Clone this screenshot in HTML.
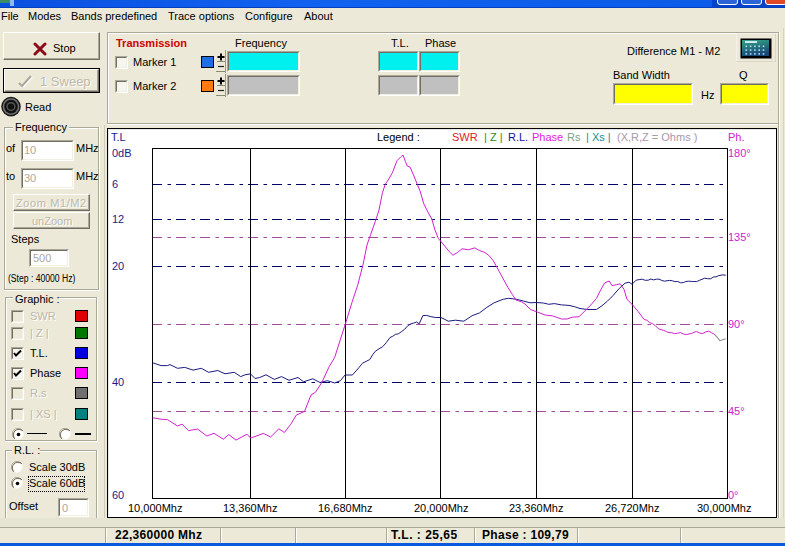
<!DOCTYPE html>
<html><head><meta charset="utf-8"><style>
html,body{margin:0;padding:0;width:785px;height:546px;overflow:hidden;background:#ECE9D8;}
.t{position:absolute;white-space:nowrap;font-family:"Liberation Sans",sans-serif;}
.b{position:absolute;}
</style></head><body>
<div class="b" style="left:0px;top:0px;width:785px;height:7px;background:linear-gradient(90deg,#0A50E0,#1262F0 40%,#0A5AE8)"></div>
<div class="b" style="left:0px;top:7px;width:785px;height:1px;background:#0340C0"></div>
<div class="b" style="left:0px;top:0px;width:10px;height:3px;background:#3c8c6a"></div>
<div class="b" style="left:10px;top:0px;width:4px;height:6px;background:#8CB8F0"></div>
<div class="b" style="left:712px;top:0px;width:73px;height:7px;background:#0842C8"></div>
<div class="b" style="left:717px;top:-4px;width:21px;height:9px;background:#2C64D8;border:1px solid #fff;border-radius:3px;box-sizing:border-box"></div>
<div class="b" style="left:741px;top:-4px;width:21px;height:9px;background:#2C64D8;border:1px solid #fff;border-radius:3px;box-sizing:border-box"></div>
<div class="b" style="left:765px;top:-4px;width:22px;height:9px;background:#E0482A;border:1px solid #fff;border-radius:3px;box-sizing:border-box"></div>
<div class="t" style="left:1px;top:10.19px;font-size:11px;line-height:13px;color:#000;font-weight:normal;">File</div>
<div class="t" style="left:28px;top:10.19px;font-size:11px;line-height:13px;color:#000;font-weight:normal;">Modes</div>
<div class="t" style="left:71px;top:10.19px;font-size:11px;line-height:13px;color:#000;font-weight:normal;">Bands predefined</div>
<div class="t" style="left:168px;top:10.19px;font-size:11px;line-height:13px;color:#000;font-weight:normal;">Trace options</div>
<div class="t" style="left:245px;top:10.19px;font-size:11px;line-height:13px;color:#000;font-weight:normal;">Configure</div>
<div class="t" style="left:304px;top:10.19px;font-size:11px;line-height:13px;color:#000;font-weight:normal;">About</div>
<div class="b" style="left:3px;top:32px;width:97px;height:28px;background:#ECE9D8;border-top:1px solid #fff;border-left:1px solid #fff;border-right:1px solid #716F64;border-bottom:1px solid #716F64;box-sizing:border-box"></div>
<div class="b" style="left:4px;top:33px;width:95px;height:26px;border-right:1px solid #ACA899;border-bottom:1px solid #ACA899;box-sizing:border-box"></div>
<svg class="b" style="left:33px;top:42px" width="14" height="14"><path d="M2 2 L12 12 M12 2 L2 12" stroke="#8B0A1A" stroke-width="3" stroke-linecap="round"/></svg>
<div class="t" style="left:53px;top:41.69px;font-size:11px;line-height:13px;color:#000;font-weight:normal;">Stop</div>
<div class="b" style="left:3px;top:68px;width:97px;height:25px;border:1px solid #000;box-sizing:border-box"></div>
<div class="b" style="left:4px;top:69px;width:95px;height:23px;background:#ECE9D8;border-top:1px solid #fff;border-left:1px solid #fff;border-right:1px solid #716F64;border-bottom:1px solid #716F64;box-sizing:border-box"></div>
<div class="b" style="left:5px;top:70px;width:93px;height:21px;border-right:1px solid #ACA899;border-bottom:1px solid #ACA899;box-sizing:border-box"></div>
<svg class="b" style="left:17px;top:74px" width="17" height="13"><path d="M2 9 L5 12 L14 2" stroke="#fff" stroke-width="2" fill="none" transform="translate(1,1)"/><path d="M2 9 L5 12 L14 2" stroke="#ACA899" stroke-width="2" fill="none"/></svg>
<div class="t" style="left:41px;top:75.00px;font-size:13px;line-height:15px;color:#fff;font-weight:normal;">1 Sweep</div>
<div class="t" style="left:40px;top:74.00px;font-size:13px;line-height:15px;color:#BCB8A8;font-weight:normal;">1 Sweep</div>
<svg class="b" style="left:1px;top:96px" width="21" height="21"><circle cx="10" cy="10.6" r="9.8" fill="#1a1a1a"/><circle cx="10" cy="10.6" r="8.4" fill="#707070"/><circle cx="10" cy="10.6" r="6.8" fill="#111"/><circle cx="10" cy="10.6" r="4.6" fill="#555"/><circle cx="10" cy="10.6" r="3.2" fill="#111"/></svg>
<div class="t" style="left:25px;top:100.69px;font-size:11px;line-height:13px;color:#000;font-weight:normal;">Read</div>
<div class="b" style="left:4px;top:127px;width:95px;height:163px;border:1px solid #ACA899;box-sizing:border-box"></div>
<div class="b" style="left:5px;top:128px;width:93px;height:161px;border-top:1px solid #fff;border-left:1px solid #fff;box-sizing:border-box"></div>
<div class="b" style="left:4px;top:127px;width:96px;height:164px;border-right:1px solid #fff;border-bottom:1px solid #fff;box-sizing:border-box"></div>
<div class="b" style="left:13px;top:125px;width:56px;height:6px;background:#ECE9D8"></div>
<div class="t" style="left:15px;top:120.69px;font-size:11px;line-height:13px;color:#000;font-weight:normal;">Frequency</div>
<div class="t" style="left:6px;top:142.19px;font-size:11px;line-height:13px;color:#000;font-weight:normal;">of</div>
<div class="b" style="left:21px;top:140px;width:53px;height:21px;background:#fff;border-top:1px solid #ACA899;border-left:1px solid #ACA899;border-right:1px solid #fff;border-bottom:1px solid #fff;box-sizing:border-box"></div>
<div class="b" style="left:22px;top:141px;width:51px;height:19px;border-top:1px solid #716F64;border-left:1px solid #716F64;border-right:1px solid #F1EFE2;border-bottom:1px solid #F1EFE2;box-sizing:border-box"></div>
<div class="t" style="left:24px;top:143.69px;font-size:11px;line-height:13px;color:#ACA899;font-weight:normal;">10</div>
<div class="t" style="left:76px;top:142.19px;font-size:11px;line-height:13px;color:#000;font-weight:normal;">MHz</div>
<div class="t" style="left:6px;top:170.19px;font-size:11px;line-height:13px;color:#000;font-weight:normal;">to</div>
<div class="b" style="left:21px;top:168px;width:53px;height:21px;background:#fff;border-top:1px solid #ACA899;border-left:1px solid #ACA899;border-right:1px solid #fff;border-bottom:1px solid #fff;box-sizing:border-box"></div>
<div class="b" style="left:22px;top:169px;width:51px;height:19px;border-top:1px solid #716F64;border-left:1px solid #716F64;border-right:1px solid #F1EFE2;border-bottom:1px solid #F1EFE2;box-sizing:border-box"></div>
<div class="t" style="left:24px;top:171.69px;font-size:11px;line-height:13px;color:#ACA899;font-weight:normal;">30</div>
<div class="t" style="left:76px;top:170.19px;font-size:11px;line-height:13px;color:#000;font-weight:normal;">MHz</div>
<div class="b" style="left:13px;top:194px;width:77px;height:17px;background:#ECE9D8;border-top:1px solid #fff;border-left:1px solid #fff;border-right:1px solid #716F64;border-bottom:1px solid #716F64;box-sizing:border-box"></div>
<div class="b" style="left:14px;top:195px;width:75px;height:15px;border-right:1px solid #ACA899;border-bottom:1px solid #ACA899;box-sizing:border-box"></div>
<div class="t" style="left:17px;top:197.69px;font-size:11px;line-height:13px;color:#fff;font-weight:normal;"><span style='letter-spacing:0.6px'>Zoom M1/M2</span></div>
<div class="t" style="left:16px;top:196.69px;font-size:11px;line-height:13px;color:#BCB8A8;font-weight:normal;"><span style='letter-spacing:0.6px'>Zoom M1/M2</span></div>
<div class="b" style="left:13px;top:212px;width:77px;height:17px;background:#ECE9D8;border-top:1px solid #fff;border-left:1px solid #fff;border-right:1px solid #716F64;border-bottom:1px solid #716F64;box-sizing:border-box"></div>
<div class="b" style="left:14px;top:213px;width:75px;height:15px;border-right:1px solid #ACA899;border-bottom:1px solid #ACA899;box-sizing:border-box"></div>
<div class="t" style="left:33px;top:215.69px;font-size:11px;line-height:13px;color:#fff;font-weight:normal;">unZoom</div>
<div class="t" style="left:32px;top:214.69px;font-size:11px;line-height:13px;color:#BCB8A8;font-weight:normal;">unZoom</div>
<div class="t" style="left:11px;top:233.19px;font-size:11px;line-height:13px;color:#000;font-weight:normal;">Steps</div>
<div class="b" style="left:29px;top:249px;width:40px;height:18px;background:#fff;border-top:1px solid #ACA899;border-left:1px solid #ACA899;border-right:1px solid #fff;border-bottom:1px solid #fff;box-sizing:border-box"></div>
<div class="b" style="left:30px;top:250px;width:38px;height:16px;border-top:1px solid #716F64;border-left:1px solid #716F64;border-right:1px solid #F1EFE2;border-bottom:1px solid #F1EFE2;box-sizing:border-box"></div>
<div class="t" style="left:33px;top:251.69px;font-size:11px;line-height:13px;color:#ACA899;font-weight:normal;">500</div>
<div class="t" style="left:8px;top:272.54px;font-size:10px;line-height:12px;color:#000;font-weight:normal;transform:scaleX(0.86);transform-origin:0 0">(Step : 40000 Hz)</div>
<div class="b" style="left:5px;top:297px;width:92px;height:144px;border:1px solid #ACA899;box-sizing:border-box"></div>
<div class="b" style="left:6px;top:298px;width:90px;height:142px;border-top:1px solid #fff;border-left:1px solid #fff;box-sizing:border-box"></div>
<div class="b" style="left:5px;top:297px;width:93px;height:145px;border-right:1px solid #fff;border-bottom:1px solid #fff;box-sizing:border-box"></div>
<div class="b" style="left:13px;top:295px;width:46px;height:6px;background:#ECE9D8"></div>
<div class="t" style="left:15px;top:292.69px;font-size:11px;line-height:13px;color:#000;font-weight:normal;">Graphic :</div>
<div class="b" style="left:11px;top:310px;width:13px;height:13px;background:#ECE9D8;border-top:1px solid #ACA899;border-left:1px solid #ACA899;border-right:1px solid #fff;border-bottom:1px solid #fff;box-sizing:border-box"></div>
<div class="b" style="left:12px;top:311px;width:11px;height:11px;border-top:1px solid #716F64;border-left:1px solid #716F64;border-right:1px solid #F1EFE2;border-bottom:1px solid #F1EFE2;box-sizing:border-box"></div>
<div class="t" style="left:31px;top:310.69px;font-size:11px;line-height:13px;color:#fff;font-weight:normal;">SWR</div>
<div class="t" style="left:30px;top:309.69px;font-size:11px;line-height:13px;color:#BCB8A8;font-weight:normal;">SWR</div>
<div class="b" style="left:75px;top:310px;width:13px;height:12px;background:#E00000;border:1px solid #000;box-sizing:border-box"></div>
<div class="b" style="left:11px;top:327px;width:13px;height:13px;background:#ECE9D8;border-top:1px solid #ACA899;border-left:1px solid #ACA899;border-right:1px solid #fff;border-bottom:1px solid #fff;box-sizing:border-box"></div>
<div class="b" style="left:12px;top:328px;width:11px;height:11px;border-top:1px solid #716F64;border-left:1px solid #716F64;border-right:1px solid #F1EFE2;border-bottom:1px solid #F1EFE2;box-sizing:border-box"></div>
<div class="t" style="left:31px;top:327.69px;font-size:11px;line-height:13px;color:#fff;font-weight:normal;">| Z |</div>
<div class="t" style="left:30px;top:326.69px;font-size:11px;line-height:13px;color:#BCB8A8;font-weight:normal;">| Z |</div>
<div class="b" style="left:75px;top:327px;width:13px;height:12px;background:#007800;border:1px solid #000;box-sizing:border-box"></div>
<div class="b" style="left:11px;top:347px;width:13px;height:13px;background:#F6F5EE;border-top:1px solid #ACA899;border-left:1px solid #ACA899;border-right:1px solid #fff;border-bottom:1px solid #fff;box-sizing:border-box"></div>
<div class="b" style="left:12px;top:348px;width:11px;height:11px;border-top:1px solid #716F64;border-left:1px solid #716F64;border-right:1px solid #F1EFE2;border-bottom:1px solid #F1EFE2;box-sizing:border-box"></div>
<svg class="b" style="left:11px;top:347px" width="13" height="13"><path d="M3 6 L5 8.5 L10 3.5" stroke="#000" stroke-width="2" fill="none"/></svg>
<div class="t" style="left:30px;top:346.69px;font-size:11px;line-height:13px;color:#000;font-weight:normal;">T.L.</div>
<div class="b" style="left:75px;top:347px;width:13px;height:12px;background:#0000E0;border:1px solid #000;box-sizing:border-box"></div>
<div class="b" style="left:11px;top:367px;width:13px;height:13px;background:#F6F5EE;border-top:1px solid #ACA899;border-left:1px solid #ACA899;border-right:1px solid #fff;border-bottom:1px solid #fff;box-sizing:border-box"></div>
<div class="b" style="left:12px;top:368px;width:11px;height:11px;border-top:1px solid #716F64;border-left:1px solid #716F64;border-right:1px solid #F1EFE2;border-bottom:1px solid #F1EFE2;box-sizing:border-box"></div>
<svg class="b" style="left:11px;top:367px" width="13" height="13"><path d="M3 6 L5 8.5 L10 3.5" stroke="#000" stroke-width="2" fill="none"/></svg>
<div class="t" style="left:30px;top:366.69px;font-size:11px;line-height:13px;color:#000;font-weight:normal;">Phase</div>
<div class="b" style="left:75px;top:367px;width:13px;height:12px;background:#FF00FF;border:1px solid #000;box-sizing:border-box"></div>
<div class="b" style="left:11px;top:387px;width:13px;height:13px;background:#ECE9D8;border-top:1px solid #ACA899;border-left:1px solid #ACA899;border-right:1px solid #fff;border-bottom:1px solid #fff;box-sizing:border-box"></div>
<div class="b" style="left:12px;top:388px;width:11px;height:11px;border-top:1px solid #716F64;border-left:1px solid #716F64;border-right:1px solid #F1EFE2;border-bottom:1px solid #F1EFE2;box-sizing:border-box"></div>
<div class="t" style="left:31px;top:387.69px;font-size:11px;line-height:13px;color:#fff;font-weight:normal;">R.s</div>
<div class="t" style="left:30px;top:386.69px;font-size:11px;line-height:13px;color:#BCB8A8;font-weight:normal;">R.s</div>
<div class="b" style="left:75px;top:387px;width:13px;height:12px;background:#707070;border:1px solid #000;box-sizing:border-box"></div>
<div class="b" style="left:11px;top:408px;width:13px;height:13px;background:#ECE9D8;border-top:1px solid #ACA899;border-left:1px solid #ACA899;border-right:1px solid #fff;border-bottom:1px solid #fff;box-sizing:border-box"></div>
<div class="b" style="left:12px;top:409px;width:11px;height:11px;border-top:1px solid #716F64;border-left:1px solid #716F64;border-right:1px solid #F1EFE2;border-bottom:1px solid #F1EFE2;box-sizing:border-box"></div>
<div class="t" style="left:31px;top:408.69px;font-size:11px;line-height:13px;color:#fff;font-weight:normal;">| XS |</div>
<div class="t" style="left:30px;top:407.69px;font-size:11px;line-height:13px;color:#BCB8A8;font-weight:normal;">| XS |</div>
<div class="b" style="left:75px;top:408px;width:13px;height:12px;background:#008080;border:1px solid #000;box-sizing:border-box"></div>
<svg class="b" style="left:12px;top:428px" width="13" height="13"><path d="M2 10 A5.5 5.5 0 0 1 10 2" stroke="#ACA899" fill="none"/><path d="M3 11 A5 5 0 0 1 11 3" stroke="#716F64" fill="none"/><path d="M10.5 3 A5.5 5.5 0 0 1 3 10.5" stroke="#fff" fill="none"/><circle cx="6.5" cy="6.5" r="4.2" fill="#fff"/><circle cx="6.5" cy="6.5" r="1.8" fill="#000"/></svg>
<div class="b" style="left:27px;top:433px;width:20px;height:1px;background:#000"></div>
<svg class="b" style="left:59px;top:428px" width="13" height="13"><path d="M2 10 A5.5 5.5 0 0 1 10 2" stroke="#ACA899" fill="none"/><path d="M3 11 A5 5 0 0 1 11 3" stroke="#716F64" fill="none"/><path d="M10.5 3 A5.5 5.5 0 0 1 3 10.5" stroke="#fff" fill="none"/><circle cx="6.5" cy="6.5" r="4.2" fill="#fff"/></svg>
<div class="b" style="left:75px;top:433px;width:16px;height:2px;background:#000"></div>
<div class="b" style="left:5px;top:450px;width:92px;height:71px;border:1px solid #ACA899;box-sizing:border-box"></div>
<div class="b" style="left:6px;top:451px;width:90px;height:69px;border-top:1px solid #fff;border-left:1px solid #fff;box-sizing:border-box"></div>
<div class="b" style="left:5px;top:450px;width:93px;height:72px;border-right:1px solid #fff;border-bottom:1px solid #fff;box-sizing:border-box"></div>
<div class="b" style="left:12px;top:448px;width:28px;height:6px;background:#ECE9D8"></div>
<div class="t" style="left:14px;top:444.19px;font-size:11px;line-height:13px;color:#000;font-weight:normal;">R.L. :</div>
<svg class="b" style="left:11px;top:461px" width="13" height="13"><path d="M2 10 A5.5 5.5 0 0 1 10 2" stroke="#ACA899" fill="none"/><path d="M3 11 A5 5 0 0 1 11 3" stroke="#716F64" fill="none"/><path d="M10.5 3 A5.5 5.5 0 0 1 3 10.5" stroke="#fff" fill="none"/><circle cx="6.5" cy="6.5" r="4.2" fill="#fff"/></svg>
<div class="t" style="left:29px;top:461.19px;font-size:11px;line-height:13px;color:#000;font-weight:normal;">Scale 30dB</div>
<svg class="b" style="left:11px;top:477px" width="13" height="13"><path d="M2 10 A5.5 5.5 0 0 1 10 2" stroke="#ACA899" fill="none"/><path d="M3 11 A5 5 0 0 1 11 3" stroke="#716F64" fill="none"/><path d="M10.5 3 A5.5 5.5 0 0 1 3 10.5" stroke="#fff" fill="none"/><circle cx="6.5" cy="6.5" r="4.2" fill="#fff"/><circle cx="6.5" cy="6.5" r="1.8" fill="#000"/></svg>
<div class="t" style="left:29px;top:477.19px;font-size:11px;line-height:13px;color:#000;font-weight:normal;">Scale 60dB</div>
<div class="b" style="left:28px;top:476px;width:57px;height:16px;border:1px dotted #000;box-sizing:border-box"></div>
<div class="t" style="left:9px;top:499.69px;font-size:11px;line-height:13px;color:#000;font-weight:normal;">Offset</div>
<div class="b" style="left:58px;top:498px;width:31px;height:19px;background:#fff;border-top:1px solid #ACA899;border-left:1px solid #ACA899;border-right:1px solid #fff;border-bottom:1px solid #fff;box-sizing:border-box"></div>
<div class="b" style="left:59px;top:499px;width:29px;height:17px;border-top:1px solid #716F64;border-left:1px solid #716F64;border-right:1px solid #F1EFE2;border-bottom:1px solid #F1EFE2;box-sizing:border-box"></div>
<div class="t" style="left:62px;top:501.69px;font-size:11px;line-height:13px;color:#ACA899;font-weight:normal;">0</div>
<div class="b" style="left:104px;top:125px;width:1px;height:400px;background:#CFCBBB"></div>
<div class="b" style="left:107px;top:32px;width:672px;height:92px;border:1px solid #ACA899;box-sizing:border-box"></div>
<div class="b" style="left:108px;top:33px;width:670px;height:90px;border-top:1px solid #fff;border-left:1px solid #fff;box-sizing:border-box"></div>
<div class="b" style="left:107px;top:32px;width:673px;height:93px;border-right:1px solid #fff;border-bottom:1px solid #fff;box-sizing:border-box"></div>
<div class="t" style="left:116px;top:36.69px;font-size:11px;line-height:13px;color:#D00000;font-weight:bold;">Transmission</div>
<div class="b" style="left:115px;top:56px;width:13px;height:13px;background:#F6F5EE;border-top:1px solid #ACA899;border-left:1px solid #ACA899;border-right:1px solid #fff;border-bottom:1px solid #fff;box-sizing:border-box"></div>
<div class="b" style="left:116px;top:57px;width:11px;height:11px;border-top:1px solid #716F64;border-left:1px solid #716F64;border-right:1px solid #F1EFE2;border-bottom:1px solid #F1EFE2;box-sizing:border-box"></div>
<div class="t" style="left:133px;top:55.69px;font-size:11px;line-height:13px;color:#000;font-weight:normal;">Marker 1</div>
<div class="b" style="left:115px;top:80px;width:13px;height:13px;background:#F6F5EE;border-top:1px solid #ACA899;border-left:1px solid #ACA899;border-right:1px solid #fff;border-bottom:1px solid #fff;box-sizing:border-box"></div>
<div class="b" style="left:116px;top:81px;width:11px;height:11px;border-top:1px solid #716F64;border-left:1px solid #716F64;border-right:1px solid #F1EFE2;border-bottom:1px solid #F1EFE2;box-sizing:border-box"></div>
<div class="t" style="left:133px;top:79.69px;font-size:11px;line-height:13px;color:#000;font-weight:normal;">Marker 2</div>
<div class="b" style="left:201px;top:56px;width:13px;height:12px;background:#1E6FE6;border:1px solid #000;box-sizing:border-box"></div>
<div class="b" style="left:201px;top:80px;width:13px;height:12px;background:#FF7A10;border:1px solid #000;box-sizing:border-box"></div>
<svg class="b" style="left:215px;top:50px" width="11" height="23"><path d="M2.5 7 H9.5 M6 3.5 V10.5" stroke="#000" stroke-width="2"/><path d="M2 11.5 H10" stroke="#8A8878"/><path d="M3 16.5 H9" stroke="#222" stroke-width="1.2"/><path d="M1 21.5 H11" stroke="#8A8A70"/><path d="M10.5 0 V23" stroke="#9A9888"/></svg>
<svg class="b" style="left:215px;top:74px" width="11" height="23"><path d="M2.5 7 H9.5 M6 3.5 V10.5" stroke="#000" stroke-width="2"/><path d="M2 11.5 H10" stroke="#8A8878"/><path d="M3 16.5 H9" stroke="#222" stroke-width="1.2"/><path d="M1 21.5 H11" stroke="#8A8A70"/><path d="M10.5 0 V23" stroke="#9A9888"/></svg>
<div class="t" style="left:235px;top:37.19px;font-size:11px;line-height:13px;color:#000;font-weight:normal;">Frequency</div>
<div class="b" style="left:227px;top:51px;width:73px;height:21px;background:#00F0F0;border-top:1px solid #ACA899;border-left:1px solid #ACA899;border-right:1px solid #fff;border-bottom:1px solid #fff;box-sizing:border-box"></div>
<div class="b" style="left:228px;top:52px;width:71px;height:19px;border-top:1px solid #716F64;border-left:1px solid #716F64;border-right:1px solid #F1EFE2;border-bottom:1px solid #F1EFE2;box-sizing:border-box"></div>
<div class="b" style="left:227px;top:75px;width:73px;height:21px;background:#C0C0C0;border-top:1px solid #ACA899;border-left:1px solid #ACA899;border-right:1px solid #fff;border-bottom:1px solid #fff;box-sizing:border-box"></div>
<div class="b" style="left:228px;top:76px;width:71px;height:19px;border-top:1px solid #716F64;border-left:1px solid #716F64;border-right:1px solid #F1EFE2;border-bottom:1px solid #F1EFE2;box-sizing:border-box"></div>
<div class="t" style="left:391px;top:37.19px;font-size:11px;line-height:13px;color:#000;font-weight:normal;">T.L.</div>
<div class="t" style="left:425px;top:37.19px;font-size:11px;line-height:13px;color:#000;font-weight:normal;">Phase</div>
<div class="b" style="left:378px;top:51px;width:41px;height:21px;background:#00F0F0;border-top:1px solid #ACA899;border-left:1px solid #ACA899;border-right:1px solid #fff;border-bottom:1px solid #fff;box-sizing:border-box"></div>
<div class="b" style="left:379px;top:52px;width:39px;height:19px;border-top:1px solid #716F64;border-left:1px solid #716F64;border-right:1px solid #F1EFE2;border-bottom:1px solid #F1EFE2;box-sizing:border-box"></div>
<div class="b" style="left:419px;top:51px;width:41px;height:21px;background:#00F0F0;border-top:1px solid #ACA899;border-left:1px solid #ACA899;border-right:1px solid #fff;border-bottom:1px solid #fff;box-sizing:border-box"></div>
<div class="b" style="left:420px;top:52px;width:39px;height:19px;border-top:1px solid #716F64;border-left:1px solid #716F64;border-right:1px solid #F1EFE2;border-bottom:1px solid #F1EFE2;box-sizing:border-box"></div>
<div class="b" style="left:378px;top:75px;width:41px;height:21px;background:#C0C0C0;border-top:1px solid #ACA899;border-left:1px solid #ACA899;border-right:1px solid #fff;border-bottom:1px solid #fff;box-sizing:border-box"></div>
<div class="b" style="left:379px;top:76px;width:39px;height:19px;border-top:1px solid #716F64;border-left:1px solid #716F64;border-right:1px solid #F1EFE2;border-bottom:1px solid #F1EFE2;box-sizing:border-box"></div>
<div class="b" style="left:419px;top:75px;width:41px;height:21px;background:#C0C0C0;border-top:1px solid #ACA899;border-left:1px solid #ACA899;border-right:1px solid #fff;border-bottom:1px solid #fff;box-sizing:border-box"></div>
<div class="b" style="left:420px;top:76px;width:39px;height:19px;border-top:1px solid #716F64;border-left:1px solid #716F64;border-right:1px solid #F1EFE2;border-bottom:1px solid #F1EFE2;box-sizing:border-box"></div>
<div class="t" style="left:627px;top:44.69px;font-size:11px;line-height:13px;color:#000;font-weight:normal;">Difference M1 - M2</div>
<div class="b" style="left:736px;top:33px;width:40px;height:29px;border-top:1px solid #F4F2EA;border-left:1px solid #F4F2EA;border-right:1px solid #DCD8C8;border-bottom:1px solid #DCD8C8;box-sizing:border-box"></div>
<svg class="b" style="left:740px;top:38px" width="32" height="21"><rect x="0.5" y="0.5" width="31" height="20" fill="#000" /><rect x="2" y="2" width="27" height="16" fill="url(#cg)"/><defs><linearGradient id="cg" x1="0" y1="0" x2="0.3" y2="1"><stop offset="0" stop-color="#34A882"/><stop offset="1" stop-color="#184878"/></linearGradient></defs><rect x="5" y="3" width="12" height="2" fill="#CFE8FF"/><rect x="5.5" y="7.5" width="1.6" height="1.6" fill="#B8D8F8"/><rect x="9.8" y="7.5" width="1.6" height="1.6" fill="#B8D8F8"/><rect x="14.1" y="7.5" width="1.6" height="1.6" fill="#B8D8F8"/><rect x="18.4" y="7.5" width="1.6" height="1.6" fill="#B8D8F8"/><rect x="22.7" y="7.5" width="1.6" height="1.6" fill="#B8D8F8"/><rect x="5.5" y="11.3" width="1.6" height="1.6" fill="#B8D8F8"/><rect x="9.8" y="11.3" width="1.6" height="1.6" fill="#B8D8F8"/><rect x="14.1" y="11.3" width="1.6" height="1.6" fill="#B8D8F8"/><rect x="18.4" y="11.3" width="1.6" height="1.6" fill="#B8D8F8"/><rect x="22.7" y="11.3" width="1.6" height="1.6" fill="#B8D8F8"/><rect x="5.5" y="15.1" width="1.6" height="1.6" fill="#B8D8F8"/><rect x="9.8" y="15.1" width="1.6" height="1.6" fill="#B8D8F8"/><rect x="14.1" y="15.1" width="1.6" height="1.6" fill="#B8D8F8"/><rect x="18.4" y="15.1" width="1.6" height="1.6" fill="#B8D8F8"/><rect x="22.7" y="15.1" width="1.6" height="1.6" fill="#B8D8F8"/></svg>
<div class="t" style="left:613px;top:68.69px;font-size:11px;line-height:13px;color:#000;font-weight:normal;">Band Width</div>
<div class="t" style="left:739px;top:68.69px;font-size:11px;line-height:13px;color:#000;font-weight:normal;">Q</div>
<div class="b" style="left:613px;top:83px;width:80px;height:22px;background:#FFFF00;border-top:1px solid #ACA899;border-left:1px solid #ACA899;border-right:1px solid #fff;border-bottom:1px solid #fff;box-sizing:border-box"></div>
<div class="b" style="left:614px;top:84px;width:78px;height:20px;border-top:1px solid #716F64;border-left:1px solid #716F64;border-right:1px solid #F1EFE2;border-bottom:1px solid #F1EFE2;box-sizing:border-box"></div>
<div class="t" style="left:701px;top:88.69px;font-size:11px;line-height:13px;color:#000;font-weight:normal;">Hz</div>
<div class="b" style="left:720px;top:83px;width:49px;height:22px;background:#FFFF00;border-top:1px solid #ACA899;border-left:1px solid #ACA899;border-right:1px solid #fff;border-bottom:1px solid #fff;box-sizing:border-box"></div>
<div class="b" style="left:721px;top:84px;width:47px;height:20px;border-top:1px solid #716F64;border-left:1px solid #716F64;border-right:1px solid #F1EFE2;border-bottom:1px solid #F1EFE2;box-sizing:border-box"></div>
<div class="b" style="left:107px;top:128px;width:670px;height:390px;background:#fff;border:1px solid #000;box-sizing:border-box"></div>
<div class="b" style="left:108px;top:129px;width:668px;height:388px;border-top:1px solid #E8E8E8;border-left:1px solid #E8E8E8;box-sizing:border-box"></div>
<div class="b" style="left:778px;top:32px;width:1px;height:492px;background:#ACA899"></div>
<div class="b" style="left:779px;top:32px;width:1px;height:492px;background:#fff"></div>
<div class="b" style="left:783px;top:28px;width:1px;height:497px;background:#D8D4C4"></div>
<svg class="b" style="left:0;top:0" width="785" height="546"><line x1="152" y1="184.5" x2="727" y2="184.5" stroke="#000068" stroke-width="1" stroke-dasharray="10 5.5 3.5 5"/><line x1="152" y1="219.5" x2="727" y2="219.5" stroke="#000068" stroke-width="1" stroke-dasharray="10 5.5 3.5 5"/><line x1="152" y1="266.5" x2="727" y2="266.5" stroke="#000068" stroke-width="1" stroke-dasharray="10 5.5 3.5 5"/><line x1="152" y1="382.5" x2="727" y2="382.5" stroke="#000068" stroke-width="1" stroke-dasharray="10 5.5 3.5 5"/><line x1="152" y1="237.5" x2="727" y2="237.5" stroke="#A04C9C" stroke-width="1" stroke-dasharray="10 5.5 3.5 5"/><line x1="152" y1="324.5" x2="727" y2="324.5" stroke="#A04C9C" stroke-width="1" stroke-dasharray="10 5.5 3.5 5"/><line x1="152" y1="411.5" x2="727" y2="411.5" stroke="#A04C9C" stroke-width="1" stroke-dasharray="10 5.5 3.5 5"/><rect x="152.5" y="148.5" width="575" height="350" fill="none" stroke="#000" stroke-width="1"/><line x1="250.5" y1="148" x2="250.5" y2="499" stroke="#000"/><line x1="345.5" y1="148" x2="345.5" y2="499" stroke="#000"/><line x1="440.5" y1="148" x2="440.5" y2="499" stroke="#000"/><line x1="536.5" y1="148" x2="536.5" y2="499" stroke="#000"/><line x1="632.5" y1="148" x2="632.5" y2="499" stroke="#000"/><polyline points="152.7,362.8 161.0,365.6 167.4,365.6 170.0,364.6 177.5,368.3 184.8,367.4 193.0,370.1 201.3,368.3 208.6,372.3 217.8,370.5 225.0,373.8 234.2,372.3 240.7,376.6 245.0,374.8 250.5,373.9 255.0,378.5 259.7,377.5 266.0,374.8 274.3,379.4 281.6,376.6 289.0,380.3 298.0,377.5 303.6,381.8 312.8,378.8 320.0,382.5 327.4,380.7 334.7,383.0 340.5,380.6 345.0,375.0 352.4,375.0 358.8,367.8 362.5,363.2 366.1,361.4 369.8,359.5 372.6,354.8 375.3,351.3 379.0,348.8 382.6,346.7 386.3,342.6 390.0,337.5 392.7,336.3 395.5,334.3 398.2,333.9 401.4,331.7 404.6,329.3 407.8,325.7 411.0,323.8 413.8,323.1 416.5,322.0 419.2,323.8 422.9,315.6 426.5,315.4 430.2,316.5 435.5,317.5 441.0,317.5 448.3,321.2 455.6,320.2 463.9,321.2 472.1,315.7 479.5,312.9 486.8,307.4 494.1,302.8 503.3,299.2 508.8,298.3 516.0,299.2 523.4,301.0 530.0,302.8 536.0,302.5 543.3,303.0 548.8,304.3 554.3,303.6 561.6,304.9 569.0,305.4 574.5,306.7 580.0,308.5 587.3,309.5 596.4,309.5 601.9,305.8 607.4,301.2 612.9,295.7 619.3,288.4 625.0,283.2 629.0,282.2 632.1,284.2 636.1,280.2 639.2,279.6 642.2,279.2 645.2,280.3 648.2,280.2 650.9,279.0 653.6,279.9 656.3,279.2 659.0,279.1 661.7,280.4 664.4,281.2 667.1,280.7 669.7,280.4 672.4,280.8 675.1,281.6 677.8,281.5 680.5,282.8 683.2,282.6 685.8,281.5 688.5,281.2 691.2,281.4 693.9,281.5 696.6,281.6 699.3,280.4 702.0,279.3 704.7,278.2 707.7,278.7 710.7,278.8 713.4,277.0 716.1,276.8 718.8,275.6 722.3,274.9 725.8,275.2" fill="none" stroke="#1A1A80" stroke-width="1"/><polyline points="152.7,417.8 161.0,419.2 167.4,419.6 177.5,426.0 182.0,424.2 188.5,430.6 197.6,429.1 206.8,436.0 214.0,433.3 223.3,439.2 228.8,434.6 236.0,440.1 247.0,434.2 250.5,438.0 256.0,436.2 263.3,433.4 270.6,437.0 278.9,428.8 284.4,432.5 290.8,424.2 296.3,415.1 304.5,411.4 311.0,395.0 315.5,392.2 322.0,382.1 329.2,366.6 334.7,357.4 340.2,340.0 345.6,323.3 352.0,302.3 357.5,285.8 363.0,264.7 367.0,245.0 370.6,234.7 375.1,221.9 378.8,210.9 382.5,192.6 385.2,184.4 388.9,178.9 392.5,172.5 395.3,165.1 397.1,160.6 400.8,156.9 403.0,155.0 405.4,161.5 407.2,166.0 410.0,167.0 413.6,175.2 417.3,184.4 420.0,190.8 423.7,203.6 428.3,212.8 431.9,219.2 434.7,229.2 438.3,238.4 444.7,246.0 449.2,251.6 452.9,255.2 457.5,252.5 462.0,248.8 468.5,249.7 474.9,247.9 479.5,250.6 485.0,252.5 489.5,256.1 493.2,260.7 496.8,267.1 502.3,277.2 507.8,287.3 512.4,294.6 516.0,300.0 521.6,301.9 525.0,304.0 530.5,309.5 537.8,312.2 545.1,315.0 552.5,315.9 561.6,319.0 567.1,319.0 572.6,317.1 579.0,316.8 585.4,310.4 590.9,304.9 596.4,298.5 601.0,289.3 604.7,282.9 609.2,281.0 612.0,285.6 616.6,284.7 620.2,283.8 624.0,289.3 627.0,299.4 632.1,304.4 638.1,311.5 644.2,319.5 646.9,320.2 649.6,322.6 652.3,323.5 655.3,325.6 658.3,328.6 661.0,329.7 663.7,330.4 666.4,331.6 669.1,332.6 671.7,332.7 674.4,333.6 677.5,333.2 680.5,332.6 683.5,334.0 686.5,334.6 689.0,333.9 691.5,333.6 694.1,332.2 696.6,331.6 699.7,333.0 702.7,333.6 705.7,331.9 708.7,331.2 711.8,332.9 714.8,334.6" fill="none" stroke="#D020D0" stroke-width="1"/><polyline points="714.8,334.6 717.3,337.4 719.8,340.7 725.8,338.7" fill="none" stroke="#909090" stroke-width="1.1"/></svg>
<div class="t" style="left:111px;top:131.19px;font-size:11px;line-height:13px;color:#1A1A8A;font-weight:normal;">T.L</div>
<div class="t" style="left:112px;top:146.69px;font-size:11px;line-height:13px;color:#1A1A8A;font-weight:normal;">0dB</div>
<div class="t" style="left:112px;top:177.69px;font-size:11px;line-height:13px;color:#1A1A8A;font-weight:normal;">6</div>
<div class="t" style="left:112px;top:212.69px;font-size:11px;line-height:13px;color:#1A1A8A;font-weight:normal;">12</div>
<div class="t" style="left:112px;top:259.69px;font-size:11px;line-height:13px;color:#1A1A8A;font-weight:normal;">20</div>
<div class="t" style="left:112px;top:375.69px;font-size:11px;line-height:13px;color:#1A1A8A;font-weight:normal;">40</div>
<div class="t" style="left:112px;top:488.69px;font-size:11px;line-height:13px;color:#1A1A8A;font-weight:normal;">60</div>
<div class="t" style="left:728px;top:131.19px;font-size:11px;line-height:13px;color:#D020D0;font-weight:normal;">Ph.</div>
<div class="t" style="left:728px;top:146.69px;font-size:11px;line-height:13px;color:#D020D0;font-weight:normal;">180°</div>
<div class="t" style="left:728px;top:230.69px;font-size:11px;line-height:13px;color:#D020D0;font-weight:normal;">135°</div>
<div class="t" style="left:728px;top:317.69px;font-size:11px;line-height:13px;color:#D020D0;font-weight:normal;">90°</div>
<div class="t" style="left:728px;top:404.69px;font-size:11px;line-height:13px;color:#D020D0;font-weight:normal;">45°</div>
<div class="t" style="left:728px;top:488.69px;font-size:11px;line-height:13px;color:#D020D0;font-weight:normal;">0°</div>
<div class="t" style="left:377px;top:131.19px;font-size:11px;line-height:13px;color:#000;font-weight:normal;">Legend :</div>
<div class="t" style="left:452px;top:131.19px;font-size:11px;line-height:13px;color:#E02020;font-weight:normal;">SWR</div>
<div class="t" style="left:484px;top:131.19px;font-size:11px;line-height:13px;color:#209020;font-weight:normal;">| Z |</div>
<div class="t" style="left:508px;top:131.19px;font-size:11px;line-height:13px;color:#1010A0;font-weight:normal;">R.L.</div>
<div class="t" style="left:532px;top:131.19px;font-size:11px;line-height:13px;color:#E020E0;font-weight:normal;">Phase</div>
<div class="t" style="left:567px;top:131.19px;font-size:11px;line-height:13px;color:#80A080;font-weight:normal;">Rs</div>
<div class="t" style="left:586px;top:131.19px;font-size:11px;line-height:13px;color:#209090;font-weight:normal;">| Xs |</div>
<div class="t" style="left:617px;top:131.19px;font-size:11px;line-height:13px;color:#A898A8;font-weight:normal;">(X,R,Z = Ohms )</div>
<div class="t" style="left:128px;top:502.19px;font-size:11px;line-height:13px;color:#000;font-weight:normal;">10,000Mhz</div>
<div class="t" style="left:223px;top:502.19px;font-size:11px;line-height:13px;color:#000;font-weight:normal;">13,360Mhz</div>
<div class="t" style="left:318px;top:502.19px;font-size:11px;line-height:13px;color:#000;font-weight:normal;">16,680Mhz</div>
<div class="t" style="left:414px;top:502.19px;font-size:11px;line-height:13px;color:#000;font-weight:normal;">20,000Mhz</div>
<div class="t" style="left:509px;top:502.19px;font-size:11px;line-height:13px;color:#000;font-weight:normal;">23,360Mhz</div>
<div class="t" style="left:605px;top:502.19px;font-size:11px;line-height:13px;color:#000;font-weight:normal;">26,720Mhz</div>
<div class="t" style="left:697px;top:502.19px;font-size:11px;line-height:13px;color:#000;font-weight:normal;">30,000Mhz</div>
<div class="b" style="left:0px;top:518px;width:785px;height:9px;background:#E6E4D2"></div>
<div class="b" style="left:0px;top:527px;width:785px;height:16px;background:#ECE9D8"></div>
<div class="b" style="left:0px;top:527px;width:785px;height:1px;background:#ACA899"></div>
<div class="b" style="left:105px;top:528px;width:1px;height:15px;background:#ACA899"></div>
<div class="b" style="left:106px;top:528px;width:1px;height:15px;background:#fff"></div>
<div class="b" style="left:220px;top:528px;width:1px;height:15px;background:#ACA899"></div>
<div class="b" style="left:221px;top:528px;width:1px;height:15px;background:#fff"></div>
<div class="b" style="left:295px;top:528px;width:1px;height:15px;background:#ACA899"></div>
<div class="b" style="left:296px;top:528px;width:1px;height:15px;background:#fff"></div>
<div class="b" style="left:386px;top:528px;width:1px;height:15px;background:#ACA899"></div>
<div class="b" style="left:387px;top:528px;width:1px;height:15px;background:#fff"></div>
<div class="b" style="left:474px;top:528px;width:1px;height:15px;background:#ACA899"></div>
<div class="b" style="left:475px;top:528px;width:1px;height:15px;background:#fff"></div>
<div class="b" style="left:577px;top:528px;width:1px;height:15px;background:#ACA899"></div>
<div class="b" style="left:578px;top:528px;width:1px;height:15px;background:#fff"></div>
<div class="b" style="left:680px;top:528px;width:1px;height:15px;background:#ACA899"></div>
<div class="b" style="left:681px;top:528px;width:1px;height:15px;background:#fff"></div>
<div class="t" style="left:115px;top:528.34px;font-size:12px;line-height:14px;color:#000;font-weight:bold;letter-spacing:0.3px">22,360000 Mhz</div>
<div class="t" style="left:391px;top:528.34px;font-size:12px;line-height:14px;color:#000;font-weight:bold;letter-spacing:0.5px">T.L. : 25,65</div>
<div class="t" style="left:482px;top:528.34px;font-size:12px;line-height:14px;color:#000;font-weight:bold;letter-spacing:0.3px">Phase : 109,79</div>
<div class="b" style="left:0px;top:543px;width:785px;height:3px;background:#0A5AE0"></div>

</body></html>
